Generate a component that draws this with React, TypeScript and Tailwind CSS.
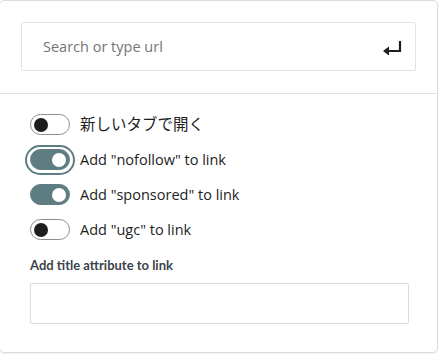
import { useState } from 'react'

const font = { fontFamily: '"Open Sans", "Noto Sans CJK JP", sans-serif' }

type ToggleProps = {
  checked: boolean
  focused?: boolean
  label: string
  jp?: boolean
  onChange: () => void
}

function Toggle({ checked, focused, label, jp, onChange }: ToggleProps) {
  return (
    <label className="flex h-[35px] cursor-pointer items-center gap-[10px]">
      <span
        className={`flex h-[30px] w-[50px] items-center justify-center rounded-full ${
          focused ? 'border-2 border-[#5e7d82]' : 'border-2 border-transparent'
        } -mx-[5px]`}
      >
        <button
          type="button"
          onClick={onChange}
          className={`relative h-[21px] w-[40px] rounded-full border ${
            checked ? 'border-[#5e7d82] bg-[#5e7d82]' : 'border-[#8c8c8c] bg-white'
          }`}
        >
          <span
            className={`absolute top-1/2 h-[14px] w-[14px] -translate-y-1/2 rounded-full ${
              checked ? 'right-[3px] bg-white' : 'left-[3px] bg-[#1e1e1e]'
            }`}
          />
        </button>
      </span>
      <span className={`${jp ? 'text-[15.5px]' : 'text-[14.5px]'} text-[#1e1e1e]`}>{label}</span>
    </label>
  )
}

export default function App() {
  const [opts, setOpts] = useState([false, true, true, false])
  const labels = ['新しいタブで開く', 'Add "nofollow" to link', 'Add "sponsored" to link', 'Add "ugc" to link']

  function flip(i: number) {
    setOpts((o) => o.map((v, j) => (j === i ? !v : v)))
  }

  return (
    <div className="h-[358px] w-[441px] bg-white" style={font}>
      <div className="-ml-px h-[353px] w-[439px] rounded-[5px] border border-[#dcdcdc] bg-white shadow-[0_1px_2px_rgba(0,0,0,0.06)]">
        <div className="border-b border-[#e0e0e0] px-[21px] pb-[22px] pt-[21px]">
          <div className="flex h-[49px] w-[395px] items-center rounded-[2px] border border-[#e2e2e2] pl-[21px] pr-[12px]">
            <input
              className="flex-1 bg-transparent text-[14.5px] text-[#1e1e1e] outline-none placeholder:text-[#757575]"
              placeholder="Search or type url"
            />
            <svg width="22" height="16" viewBox="0 0 22 16">
              <path d="M19 2v10H6" fill="none" stroke="#1e1e1e" strokeWidth="2.2" />
              <path d="M2 12l6-4.5v9z" fill="#1e1e1e" />
            </svg>
          </div>
        </div>
        <div className="px-[30px] pt-[13px]">
          {labels.map((l, i) => (
            <Toggle
              key={l}
              label={l}
              jp={i === 0}
              checked={opts[i]}
              focused={i === 1}
              onChange={() => flip(i)}
            />
          ))}
          <p
            className="mt-[9px] text-[13px] font-bold text-[#3c434a]"
            style={{ fontFamily: 'Lato, "Open Sans", sans-serif' }}
          >
            Add title attribute to link
          </p>
          <input className="mt-[7px] h-[41px] w-[379px] rounded-[2px] border border-[#dcdcdc] px-2 text-[15px] outline-none" />
        </div>
      </div>
    </div>
  )
}
